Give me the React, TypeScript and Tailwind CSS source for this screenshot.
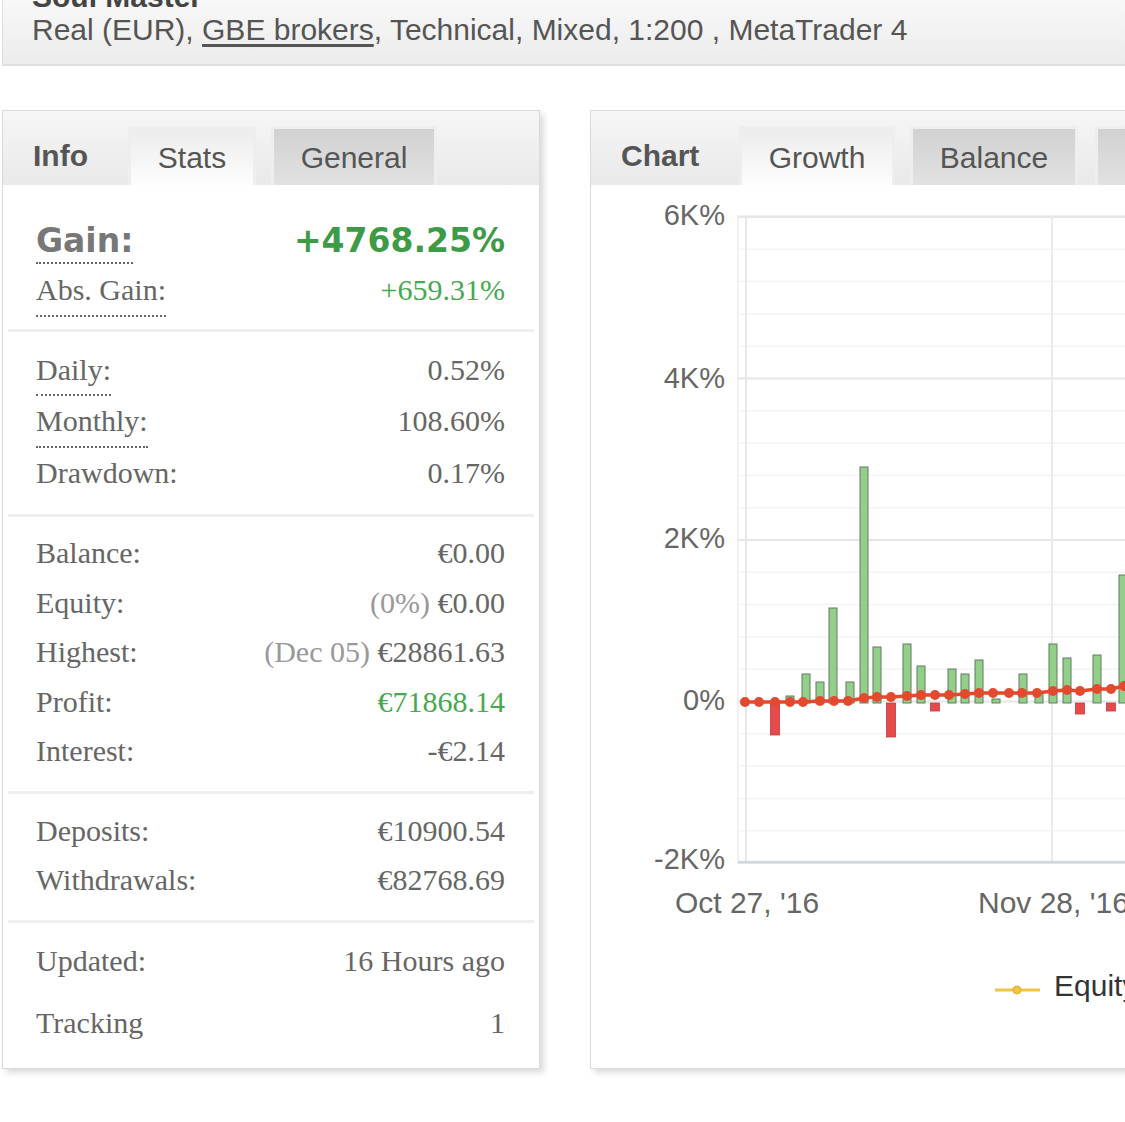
const sans = "font-['Liberation_Sans',Arial,sans-serif]";

const Row = ({
  label,
  value,
  h,
  under,
  pb = 0,
}: {
  label: string;
  value: React.ReactNode;
  h: string;
  under?: boolean;
  pb?: number;
}) => (
  <div className={`flex justify-between items-start ${h}`}>
    <span
      className={
        under
          ? 'leading-[30px] border-b-2 border-dotted border-[#666]'
          : 'leading-[30px]'
      }
      style={under ? { paddingBottom: pb } : undefined}
    >
      {label}
    </span>
    <span className="leading-[30px]">{value}</span>
  </div>
);

const Sep = () => <div className="mx-[5px] h-[3px] bg-[#eeeeee]" />;

const Tab = ({ label, active, w }: { label: string; active?: boolean; w: string }) => (
  <div
    className={`${w} shrink-0 h-[59px] flex items-center justify-center border-[3px] border-b-0 border-[#eeeeee] text-[30px] text-[#555] ${
      active
        ? 'bg-linear-to-b from-[#ececec] to-[#fdfdfd]'
        : 'bg-linear-to-b from-[#d1d1d1] to-[#e2e2e2]'
    }`}
  >
    {label}
  </div>
);

const InfoPanel = () => (
  <div className="w-[538px] shrink-0 border border-[#dadada] bg-white shadow-[4px_4px_6px_rgba(0,0,0,0.14)]">
    <div className={`h-[74px] flex items-end pl-[30px] bg-linear-to-b from-[#f6f6f6] to-[#e9e9e9] ${sans}`}>
      <div className="w-[95px] shrink-0 h-[59px] leading-[59px] text-[30px] font-bold text-[#555]">Info</div>
      <Tab label="Stats" active w="w-[128px]" />
      <div className="w-[15px] shrink-0" />
      <Tab label="General" w="w-[166px]" />
    </div>

    <div className="font-['Liberation_Serif','Times_New_Roman',serif] text-[30px] text-[#666]">
      <div className="pt-[39px] pb-[12px] pl-[33px] pr-[34px]">
        <div className="flex justify-between items-start h-[51px] font-['DejaVu_Sans',Verdana,sans-serif] font-bold text-[33px]">
          <span className="leading-[33px] pb-[5px] text-[#777] border-b-2 border-dotted border-[#666]">Gain:</span>
          <span className="leading-[33px] text-[#3d9b46]">+4768.25%</span>
        </div>
        <Row
          label="Abs. Gain:"
          value={<span className="text-[#45a94e]">+659.31%</span>}
          h="h-[42px]"
          under
          pb={10}
        />
      </div>
      <Sep />
      <div className="pt-[23px] pb-[26px] pl-[33px] pr-[34px]">
        <Row label="Daily:" value="0.52%" h="h-[51px]" under pb={9} />
        <Row label="Monthly:" value="108.60%" h="h-[52px]" under pb={10} />
        <Row label="Drawdown:" value="0.17%" h="h-[30px]" />
      </div>
      <Sep />
      <div className="pt-[21px] pb-[25px] pl-[33px] pr-[34px]">
        <Row label="Balance:" value="€0.00" h="h-[49.5px]" />
        <Row
          label="Equity:"
          value={
            <>
              <span className="text-[#999]">(0%)</span> €0.00
            </>
          }
          h="h-[49.5px]"
        />
        <Row
          label="Highest:"
          value={
            <>
              <span className="text-[#999]">(Dec 05)</span> €28861.63
            </>
          }
          h="h-[49.5px]"
        />
        <Row label="Profit:" value={<span className="text-[#45a94e]">€71868.14</span>} h="h-[49.5px]" />
        <Row label="Interest:" value="-€2.14" h="h-[30px]" />
      </div>
      <Sep />
      <div className="pt-[22px] pb-[25px] pl-[33px] pr-[34px]">
        <Row label="Deposits:" value="€10900.54" h="h-[49px]" />
        <Row label="Withdrawals:" value="€82768.69" h="h-[30px]" />
      </div>
      <Sep />
      <div className="pt-[23px] pb-[30px] pl-[33px] pr-[34px]">
        <Row label="Updated:" value="16 Hours ago" h="h-[62px]" />
        <Row label="Tracking" value="1" h="h-[30px]" />
      </div>
    </div>
  </div>
);

// chart data in page coordinates
const ox = 591;
const oy = 185;
const zero = 703;
const greens = [
  [790, 696], [806, 674], [820, 682], [833, 608], [850, 682], [864, 467], [877, 647],
  [907, 644], [921, 666], [952, 669], [965, 674], [979, 660], [996, 699], [1023, 674],
  [1039, 693], [1053, 644], [1067, 658], [1097, 655], [1123, 575],
];
const reds = [[775, 735], [891, 737], [935, 711], [1080, 714], [1111, 711]];
const pts = [
  [745, 702], [759, 702], [775, 702], [790, 702], [803, 702], [820, 701], [834, 701],
  [848, 701], [864, 698], [877, 697], [891, 697], [907, 696], [921, 695], [935, 695],
  [949, 695], [965, 694], [979, 693], [993, 693], [1009, 693], [1022, 693], [1037, 693],
  [1053, 691], [1067, 690], [1080, 691], [1097, 689], [1111, 689], [1124, 686],
];
const yLabels = [
  ['6K%', 217],
  ['4K%', 380],
  ['2K%', 540],
  ['0%', 702],
  ['-2K%', 861],
] as const;

const GrowthChart = () => (
  <svg width="600" height="883" className="block">
    <g transform={`translate(${-ox},${-oy})`} fontFamily="Liberation Sans, Arial, sans-serif">
      <rect x="738" y="216" width="500" height="647" fill="none" stroke="#ededed" strokeWidth="1.5" />
      {Array.from({ length: 21 }, (_, k) => {
        const y = 217 + k * 32.3;
        const major = k % 5 === 0;
        return (
          <line
            key={k}
            x1="738"
            x2="1240"
            y1={y}
            y2={y}
            stroke={major ? '#e6e6e6' : '#f3f3f3'}
            strokeWidth={major ? 2 : 1.5}
          />
        );
      })}
      <line x1="746" x2="746" y1="216" y2="862" stroke="#e8e8e8" strokeWidth="2" />
      <line x1="1052" x2="1052" y1="216" y2="862" stroke="#ebebeb" strokeWidth="2" />
      <line x1="738" x2="1240" y1="862" y2="862" stroke="#d2d6df" strokeWidth="2.5" />

      {greens.map(([x, top], i) => (
        <rect key={i} x={x - 4} y={top} width="8" height={zero - top} fill="#93cf8a" stroke="#5e7d5c" strokeWidth="1" />
      ))}
      {reds.map(([x, bot], i) => (
        <rect key={i} x={x - 4.5} y={zero} width="9" height={bot - zero} fill="#e64b4b" stroke="#c23a3a" strokeWidth="0.8" />
      ))}

      <polyline
        points={pts.map(([x, y]) => `${x},${y}`).join(' ')}
        fill="none"
        stroke="#e34a2d"
        strokeWidth="3.5"
      />
      {pts.map(([x, y], i) => (
        <circle key={i} cx={x} cy={y} r="5" fill="#e34a2d" />
      ))}

      {yLabels.map(([t, y]) => (
        <text key={t} x="725" y={y} textAnchor="end" dominantBaseline="middle" fontSize="29" fill="#666">
          {t}
        </text>
      ))}
      <text x="747" y="905" textAnchor="middle" dominantBaseline="middle" fontSize="30" fill="#666">
        Oct 27, '16
      </text>
      <text x="978" y="905" dominantBaseline="middle" fontSize="30" fill="#666">
        Nov 28, '16
      </text>

      <line x1="995" x2="1040" y1="990" y2="990" stroke="#f1c542" strokeWidth="3" />
      <circle cx="1017" cy="990" r="4" fill="#f1c542" stroke="#ddb035" strokeWidth="1" />
      <text x="1054" y="988" dominantBaseline="middle" fontSize="30" fill="#333">
        Equity
      </text>
    </g>
  </svg>
);

const ChartPanel = () => (
  <div className="w-[600px] shrink-0 border border-[#dadada] bg-white shadow-[4px_4px_6px_rgba(0,0,0,0.14)]">
    <div className={`h-[74px] flex items-end pl-[30px] bg-linear-to-b from-[#f6f6f6] to-[#e9e9e9] ${sans}`}>
      <div className="w-[118px] shrink-0 h-[59px] leading-[59px] text-[30px] font-bold text-[#555]">Chart</div>
      <Tab label="Growth" active w="w-[156px]" />
      <div className="w-[15px] shrink-0" />
      <Tab label="Balance" w="w-[168px]" />
      <div className="w-[17px] shrink-0" />
      <Tab label="" w="w-[150px]" />
    </div>
    <GrowthChart />
  </div>
);

export default function App() {
  return (
    <div className="w-[1125px] h-[1122px] overflow-hidden bg-white">
      <div
        className={`ml-[2px] w-[1140px] h-[66px] overflow-hidden border-l border-b-2 border-[#dedede] bg-linear-to-b from-[#f8f8f8] to-[#ececec] pl-[29px] text-[#555] ${sans}`}
      >
        <div className="-mt-[18px] h-[30px] leading-[30px] text-[30px] font-bold text-[#444]">Soul Master</div>
        <div className="mt-[3px] leading-[30px] text-[30px] whitespace-nowrap">
          Real (EUR), <span className="underline underline-offset-4">GBE brokers</span>, Technical, Mixed, 1:200 ,
          MetaTrader 4
        </div>
      </div>
      <div className="mt-[44px] pl-[2px] flex items-start gap-[50px]">
        <InfoPanel />
        <ChartPanel />
      </div>
    </div>
  );
}
